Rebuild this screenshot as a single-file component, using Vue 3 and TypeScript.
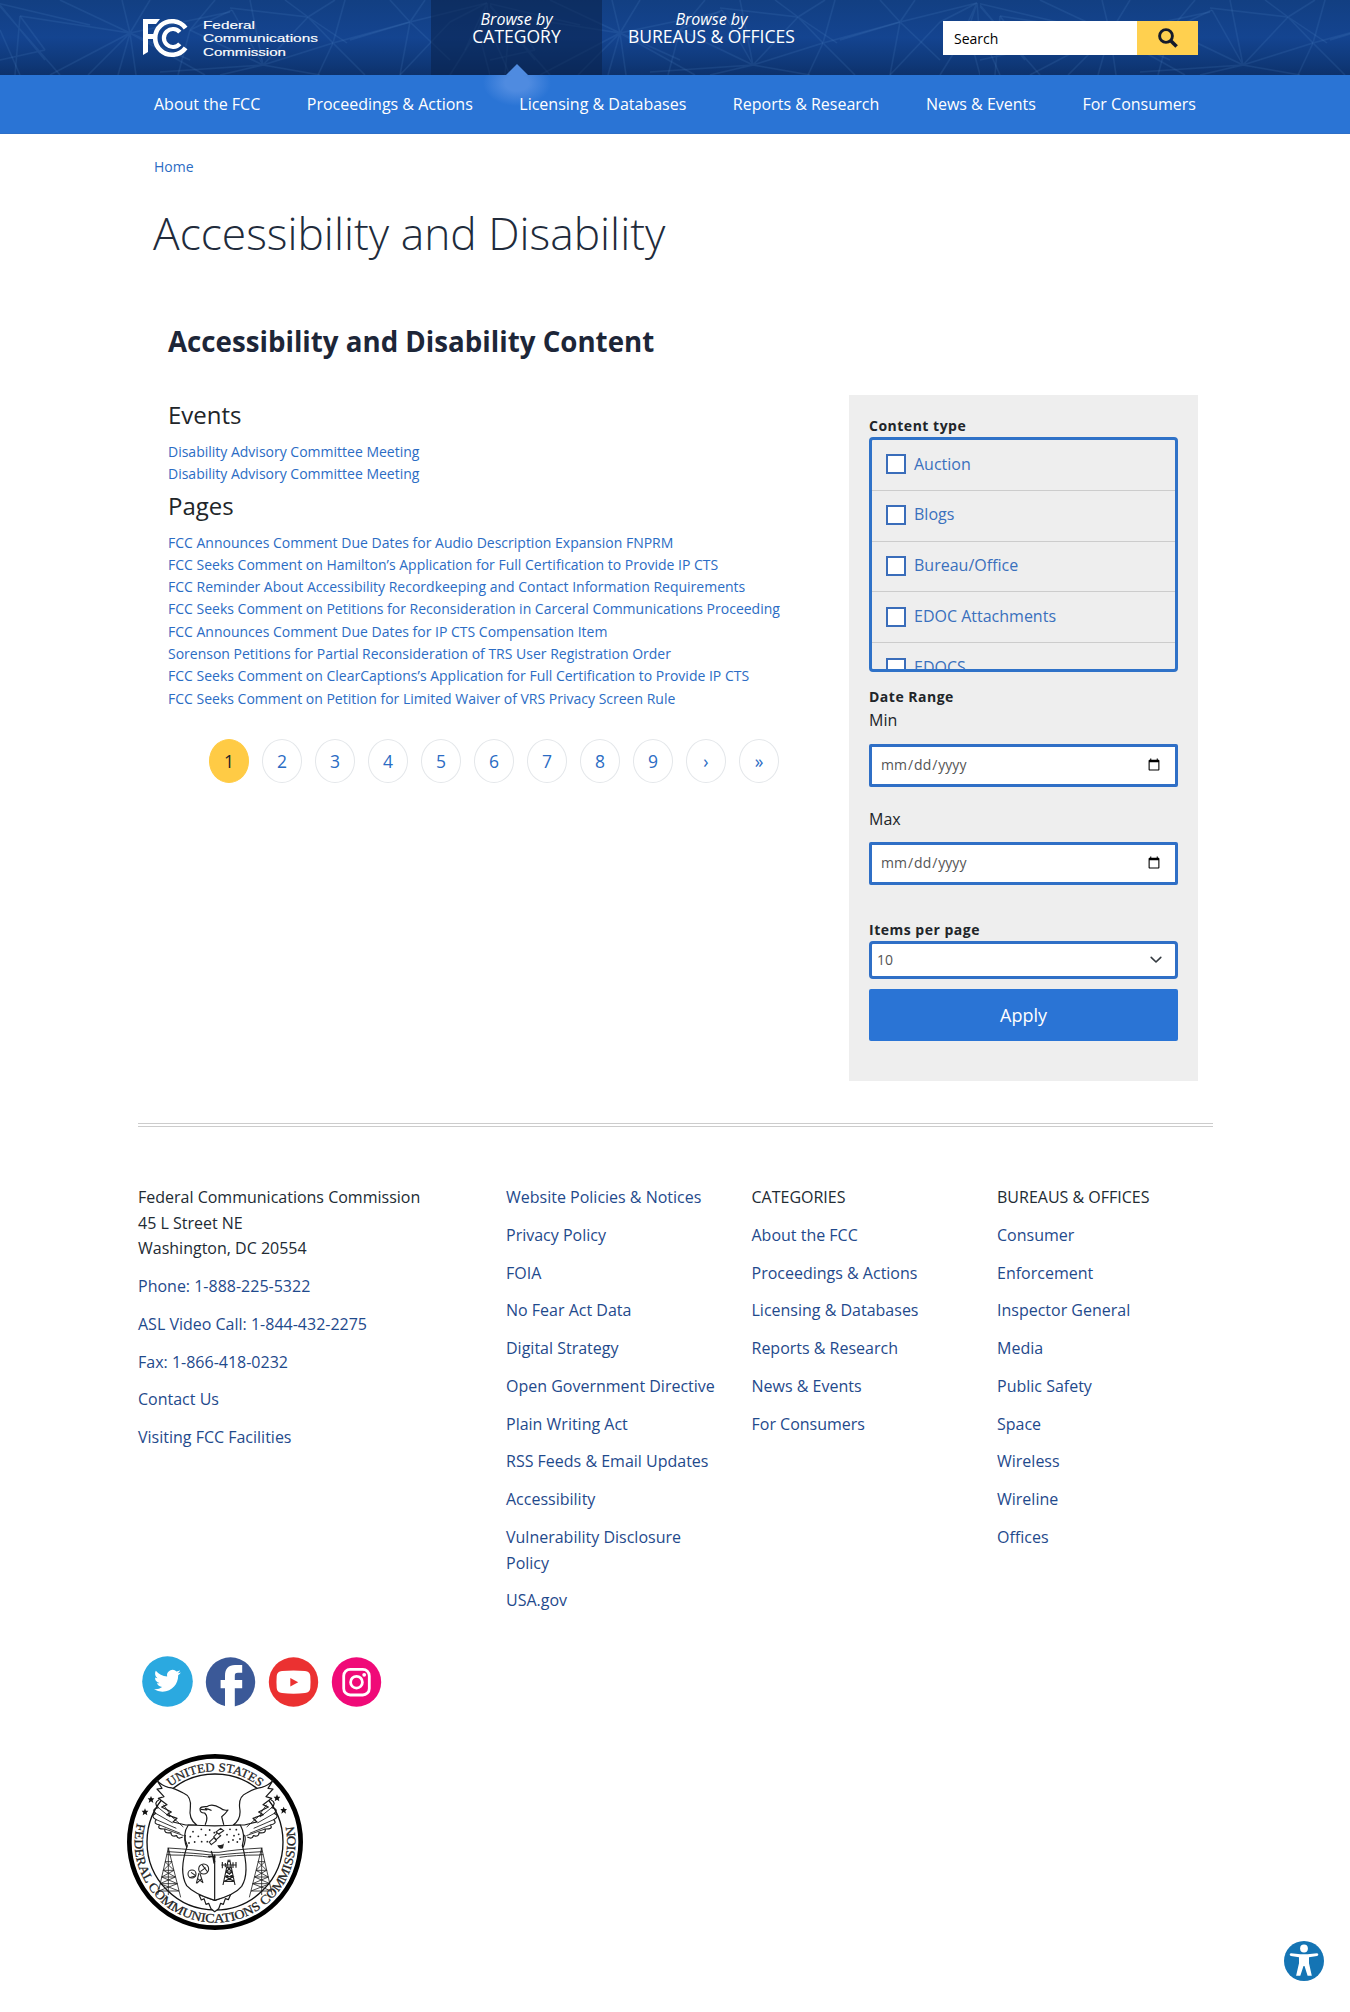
<script setup lang="ts">
import { ref } from 'vue'

const navItems: string[] = [
  'About the FCC',
  'Proceedings & Actions',
  'Licensing & Databases',
  'Reports & Research',
  'News & Events',
  'For Consumers',
]

const events: string[] = ['Disability Advisory Committee Meeting', 'Disability Advisory Committee Meeting']

const pages: string[] = [
  'FCC Announces Comment Due Dates for Audio Description Expansion FNPRM',
  'FCC Seeks Comment on Hamilton’s Application for Full Certification to Provide IP CTS',
  'FCC Reminder About Accessibility Recordkeeping and Contact Information Requirements',
  'FCC Seeks Comment on Petitions for Reconsideration in Carceral Communications Proceeding',
  'FCC Announces Comment Due Dates for IP CTS Compensation Item',
  'Sorenson Petitions for Partial Reconsideration of TRS User Registration Order',
  'FCC Seeks Comment on ClearCaptions’s Application for Full Certification to Provide IP CTS',
  'FCC Seeks Comment on Petition for Limited Waiver of VRS Privacy Screen Rule',
]

const pager: string[] = ['1', '2', '3', '4', '5', '6', '7', '8', '9', '›', '»']
const current = ref('1')

const contentTypes: string[] = ['Auction', 'Blogs', 'Bureau/Office', 'EDOC Attachments', 'EDOCS']

const contactLinks: string[] = [
  'Phone: 1-888-225-5322',
  'ASL Video Call: 1-844-432-2275',
  'Fax: 1-866-418-0232',
  'Contact Us',
  'Visiting FCC Facilities',
]

interface FooterColumn {
  heading?: string
  links: string[]
}

const footerColumns: FooterColumn[] = [
  {
    links: [
      'Website Policies & Notices',
      'Privacy Policy',
      'FOIA',
      'No Fear Act Data',
      'Digital Strategy',
      'Open Government Directive',
      'Plain Writing Act',
      'RSS Feeds & Email Updates',
      'Accessibility',
      'Vulnerability Disclosure Policy',
      'USA.gov',
    ],
  },
  { heading: 'CATEGORIES', links: navItems },
  {
    heading: 'BUREAUS & OFFICES',
    links: ['Consumer', 'Enforcement', 'Inspector General', 'Media', 'Public Safety', 'Space', 'Wireless', 'Wireline', 'Offices'],
  },
]
</script>

<template>
  <div class="page">
    <header class="top">
      <svg class="mesh" width="1350" height="75" aria-hidden="true">
        <defs>
          <pattern id="mesh" width="490" height="75" patternUnits="userSpaceOnUse">
            <g fill="none" stroke="#5f93d6" stroke-opacity=".14" stroke-width="1.5">
              <path d="M130 33 20 16M130 33 60 0M130 33 122 0M130 33 150 0M130 33 50 75M130 33 88 75M130 33 118 75M130 33 136 75M130 33 190 60M130 33 230 12M130 33 205 75" />
              <path d="M263 65 190 30M263 65 232 10M263 65 250 0M263 65 308 17M263 65 333 43M263 65 220 75M263 65 320 75M263 65 160 72" />
              <path d="M308 17 285 0M308 17 335 0M308 17 333 43M308 17 230 8M308 17 347 43" />
              <path d="M333 43 410 22M333 43 318 75M333 43 365 75M333 43 345 0" />
              <path d="M410 22 390 0M410 22 425 0M410 22 487 3M410 22 400 75M410 22 450 60M410 22 350 40" />
              <path d="M487 3 450 22M487 3 478 30M487 3 490 40M487 3 465 50M450 22 400 75M0 5 45 60M-3 3 60 75M-3 3 90 25M20 16 15 75M0 60 45 50M45 50 20 16" />
              <path d="M190 30 215 0M190 30 178 75M190 30 232 10M478 30 450 75M478 30 490 75M0 30 20 75" />
            </g>
          </pattern>
        </defs>
        <rect width="1350" height="75" fill="url(#mesh)" />
      </svg>
      <div class="top-inner">
        <svg class="logo" width="180" height="42" viewBox="0 0 180 42">
          <path d="M0 1h17l-4 5H5v10h6v5H5v13l-5 3z" fill="#fff" />
          <g fill="none" stroke="#fff" stroke-width="4.6">
            <path d="M42.600 10.200A16.800 16.800 0 1 0 42.600 29.800" />
            <path d="M36.800 14.200A9 9 0 1 0 36.800 25.800" stroke-width="4.200" />
          </g>
          <g fill="#fff" font-family="'Liberation Sans', sans-serif" font-size="11.4" stroke="#fff" stroke-width=".15">
            <text x="60" y="10.5" textLength="52" lengthAdjust="spacingAndGlyphs">Federal</text>
            <text x="60" y="24.2" textLength="115" lengthAdjust="spacingAndGlyphs">Communications</text>
            <text x="60" y="37.6" textLength="83" lengthAdjust="spacingAndGlyphs">Commission</text>
          </g>
        </svg>
        <nav class="browse">
          <a class="browse-item active"><em>Browse by</em><span>CATEGORY</span></a>
          <a class="browse-item"><em>Browse by</em><span>BUREAUS &amp; OFFICES</span></a>
        </nav>
        <form class="search" @submit.prevent>
          <div class="search-field">Search</div>
          <button type="submit" aria-label="Search">
            <svg width="20" height="20" viewBox="0 0 20 20" fill="none" stroke="#151b2b">
              <circle cx="8" cy="8" r="6.4" stroke-width="2.9" />
              <path d="M12.5 12.5 18.6 18.6" stroke-width="3.6" />
            </svg>
          </button>
        </form>
      </div>
    </header>
    <nav class="main-nav">
      <ul>
        <li v-for="item in navItems" :key="item">{{ item }}</li>
      </ul>
    </nav>

    <main>
      <a class="crumb">Home</a>
      <h1>Accessibility and Disability</h1>
      <h2>Accessibility and Disability Content</h2>
      <div class="columns">
        <section class="results">
          <h3>Events</h3>
          <ul>
            <li v-for="(item, i) in events" :key="i"><a>{{ item }}</a></li>
          </ul>
          <h3 class="second">Pages</h3>
          <ul>
            <li v-for="item in pages" :key="item"><a>{{ item }}</a></li>
          </ul>
          <div class="pager">
            <a v-for="p in pager" :key="p" :class="{ current: p === current }" @click="current = p">{{ p }}</a>
          </div>
        </section>
        <aside>
          <strong>Content type</strong>
          <div class="type-list">
            <label v-for="t in contentTypes" :key="t"><i></i>{{ t }}</label>
          </div>
          <strong class="range">Date Range</strong>
          <label class="min">Min</label>
          <input type="date" />
          <label class="max">Max</label>
          <input type="date" />
          <strong class="items">Items per page</strong>
          <div class="select">
            <span>10</span>
            <svg width="12" height="8" viewBox="0 0 12 8" fill="none" stroke="#343a40" stroke-width="1.6">
              <path d="M1.200 1.400 6 6 10.800 1.400" stroke-linecap="round" stroke-linejoin="round" />
            </svg>
          </div>
          <button class="apply">Apply</button>
        </aside>
      </div>
    </main>

    <footer>
      <div class="footer-columns">
        <div class="contact">
          <p>Federal Communications Commission<br />45 L Street NE<br />Washington, DC 20554</p>
          <p v-for="c in contactLinks" :key="c"><a>{{ c }}</a></p>
        </div>
        <div v-for="(col, i) in footerColumns" :key="i" class="links">
          <p v-if="col.heading">{{ col.heading }}</p>
          <p v-for="l in col.links" :key="l"><a>{{ l }}</a></p>
        </div>
      </div>
      <div class="social">
        <svg width="51" height="51" viewBox="0 0 51 51">
          <circle cx="25.5" cy="25.5" r="25.3" fill="#2ba9e0" />
          <path transform="translate(12 11.3) scale(1.12)" fill="#fff" d="M23.95 4.57a10 10 0 0 1-2.82.77 4.96 4.96 0 0 0 2.16-2.72c-.95.55-2 .95-3.13 1.18a4.92 4.92 0 0 0-8.38 4.48C7.69 8.1 4.07 6.13 1.64 3.16a4.82 4.82 0 0 0-.67 2.48c0 1.71.87 3.21 2.19 4.1a4.9 4.9 0 0 1-2.23-.62v.06a4.92 4.92 0 0 0 3.95 4.83 5 5 0 0 1-2.21.08 4.94 4.94 0 0 0 4.6 3.42A9.87 9.87 0 0 1 0 19.54a13.99 13.99 0 0 0 7.55 2.21c9.05 0 14-7.5 14-13.98 0-.21 0-.42-.02-.63a9.94 9.94 0 0 0 2.46-2.55z" />
        </svg>
        <svg width="51" height="51" viewBox="0 0 51 51">
          <circle cx="25.5" cy="26" r="24.7" fill="#3b5998" />
          <path fill="#fff" d="M20 51V32.200h-4.400V24H20v-4.200C20 12.500 23.500 9 30 9h7.200v7.700H33c-2.600 0-3.200 1-3.200 3.200V24h7.400v8.200h-7.400V51z" />
        </svg>
        <svg width="51" height="51" viewBox="0 0 51 51">
          <circle cx="25.5" cy="26" r="24.7" fill="#eb3131" />
          <path fill="#fff" d="M14 15Q25.500 13.800 37 15 42 15.300 42.300 20 42.800 26 42.300 32 42 36.500 37 37 25.500 38.300 14 37 9 36.500 8.700 32 8.200 26 8.700 20 9 15.300 14 15z" />
          <path fill="#eb3131" d="M22.300 22v8.400l7.900-4.200z" />
        </svg>
        <svg width="51" height="51" viewBox="0 0 51 51">
          <circle cx="25.5" cy="26" r="24.7" fill="#f00a78" />
          <g fill="none" stroke="#fff" stroke-width="2.8">
            <rect x="12.700" y="13.400" width="25.600" height="25.600" rx="6.500" />
            <circle cx="25.5" cy="26.200" r="5.900" />
          </g>
          <circle cx="33.200" cy="18.800" r="1.900" fill="#fff" />
        </svg>
      </div>
      <svg class="seal" width="180" height="180" viewBox="30 37 540 540">
        <defs>
          <path id="seal-top" d="M166 142A213 213 0 0 1 434 142" />
          <path id="seal-bottom" d="M66 250A241 241 0 1 0 534 250" />
        </defs>
        <circle cx="300" cy="307" r="257" fill="#fff" stroke="#000" stroke-width="14" />
        <circle cx="300" cy="307" r="204" fill="none" stroke="#111" stroke-width="4" />
        <g font-family="'Liberation Serif', serif" fill="#222" stroke="#222" stroke-width=".8">
          <text font-size="37" textLength="290" lengthAdjust="spacingAndGlyphs"><textPath href="#seal-top">UNITED STATES</textPath></text>
          <text font-size="38" textLength="864" lengthAdjust="spacingAndGlyphs"><textPath href="#seal-bottom">FEDERAL COMMUNICATIONS COMMISSION</textPath></text>
        </g>
        <g fill="#111">
          <path v-for="(s, i) in [[108, 180], [90, 217], [486, 175], [506, 212]]" :key="i" :transform="`translate(${s[0]} ${s[1]})`" d="M0-11 3-4 10-4 5 2 7 10 0 5-7 10-5 2-10-4-3-4z" />
        </g>
        <!-- wings and radio towers, drawn once and mirrored -->
        <g v-for="side in [1, -1]" :key="side" :transform="side === 1 ? '' : 'translate(600 0) scale(-1 1)'" fill="#fff" stroke="#1a1a1a" stroke-width="3.6" stroke-linejoin="round">
          <path d="M126 122 141 146 126 148 147 171 130 176 156 195 140 202 169 217 155 225 186 236 174 247 212 256 245 256Q220 238 226 205 230 170 205 160 178 145 160 143 140 138 126 122z" />
          <path d="M132 180Q114 190 130 204 108 208 122 221 104 229 124 240 112 252 134 256 124 269 150 268 145 282 168 279 168 293 185 288 188 300 203 292" fill="none" />
          <path d="M130 204 165 232M122 221 173 250M124 240 184 266M134 256 196 281M150 268 206 288M160 222 205 262M145 195 163 220" fill="none" stroke-width="2.6" />
          <path d="M160 325 128 466M160 325 197 473M145 392H177M140 412H181M135 432H187M131 454H192M145 392 181 412 135 432 192 454M177 392 140 412 187 432 131 454M150 366H171M155 345H166M150 366 177 392M171 366 145 392M160 325V466" fill="none" stroke-width="2.4" />
        </g>
        <g fill="#fff" stroke="#1a1a1a" stroke-width="3.6" stroke-linejoin="round" stroke-linecap="round">
          <path d="M271 254Q281 232 269 220 255 221 255 207 258 200 275 201 292 190 316 205 325 214 339 211 331 223 320 231L326 254" />
          <path d="M271 207Q280 207 288 212M258 209 275 211" fill="none" />
          <path d="M252 465 259 481 267 477 273 494 281 491 288 507 299 516 311 507 317 491 325 494 331 477 340 480 348 462 300 482z" />
          <path d="M220 256Q300 261 376 256 392 285 382 318 405 400 380 440 360 465 299 482 237 463 215 438 190 395 217 318 200 285 220 256z" />
          <path d="M299 346V480M215 322Q206 300 211 287M385 322Q394 300 389 287" fill="none" />
          <path d="M159 325Q245 330 288 338L312 338Q355 330 441 325M160 336Q245 341 288 346L312 346Q355 341 440 336M165 346Q245 346 285 353M315 353Q355 346 435 346" fill="none" stroke-width="2.6" />
          <path d="M289 335 299 366M281 350 300 352M294 352 297 370" fill="none" stroke-width="4" />
        </g>
        <g fill="#222">
          <circle v-for="(d, i) in [[234, 276], [259, 269], [284, 271], [226, 291], [250, 290], [272, 286], [222, 310], [239, 307], [260, 306], [277, 306], [345, 269], [364, 270], [336, 285], [357, 288], [371, 284], [341, 307], [354, 301], [367, 307], [375, 298], [298, 279]]" :key="i" :cx="d[0]" :cy="d[1]" r="2.7" />
          <path d="M307 317Q331 315 328 306L324 326Q312 331 307 317z" />
        </g>
        <g fill="#fff" stroke="#222" stroke-width="3.2">
          <path d="M289 315 304 303 297 294 283 307zM311 283 326 273 317 266 303 277zM304 300 317 288 307 280 296 292z" />
          <circle cx="231" cy="403" r="12" />
          <circle cx="266" cy="388" r="15" />
          <path d="M223 414 243 408M278 397 261 375M252 400 244 431M255 402 264 430M247 416 264 429M261 416 245 431M241 407 228 398M256 396 272 384" />
          <path d="M340 360 324 436M344 360 360 436M336 382H348M333 397H352M331 411H355M328 425H358M336 382 352 397 331 411 358 425M348 382 333 397 355 411 328 425M319 376H365M322 367V386M331 370V383M354 368V385M363 367V384M337 365H347" stroke-width="3.4" />
        </g>
      </svg>
    </footer>

    <button class="a11y" aria-label="Accessibility menu">
      <svg width="46" height="46" viewBox="0 0 46 46">
        <circle cx="23" cy="23" r="20" fill="#1474b4" />
        <circle cx="23" cy="10.5" r="3.9" fill="#fff" />
        <path fill="#fff" d="M10 15.200 19.500 16.200h7L36 15.200q1.500.2 1.300 1.500-.1 1-1.300 1.200L28 19.200v6l2.800 12.600h-4.200L23.500 28h-1l-3.200 9.800h-4.200L18 25.200v-6L10 17.900q-1.200-.2-1.300-1.200-.1-1.300 1.300-1.500z" />
      </svg>
    </button>
  </div>
</template>

<style>
body {
  margin: 0;
  background: #fff;
}
</style>

<style scoped>
* {
  box-sizing: border-box;
}
.page {
  position: relative;
  height: 2012px;
  overflow: hidden;
  font-family: 'Open Sans', sans-serif;
  font-size: 16px;
  line-height: 1.6;
  color: #212529;
}
ul {
  list-style: none;
  margin: 0;
  padding: 0;
}
p, h1, h2, h3 {
  margin: 0;
}
.top {
  position: relative;
  height: 75px;
  background: linear-gradient(#123f82, #144490 50%, #0f3878 85%, #0d316b);
}
.mesh {
  position: absolute;
  inset: 0;
}
.top-inner {
  position: relative;
  display: flex;
  width: 1056px;
  height: 75px;
  margin-left: 142px;
}
.logo {
  margin-top: 18px;
  margin-left: 1px;
}
.browse {
  display: flex;
  margin-left: 108px;
}
.browse-item {
  position: relative;
  display: flex;
  flex-direction: column;
  align-items: center;
  padding: 10px 26px 0;
  color: #fff;
  line-height: 18px;
  white-space: nowrap;
}
.browse-item em {
  font-size: 16px;
}
.browse-item span {
  font-size: 17.5px;
  line-height: 16px;
}
.active {
  width: 171px;
  background: rgba(9, 32, 72, 0.55);
}
.active::after {
  content: '';
  position: absolute;
  bottom: 0;
  left: 75px;
  border: 11px solid transparent;
  border-top: 0;
  border-bottom-color: #4f8be0;
}
.search {
  display: flex;
  width: 255px;
  height: 34px;
  margin: 21px 0 0 auto;
}
.search-field {
  flex: 1;
  padding-left: 11px;
  background: #fff;
  color: #000;
  font-size: 14px;
  line-height: 36px;
}
.search button {
  display: flex;
  align-items: center;
  justify-content: center;
  width: 61px;
  padding: 0;
  border: 0;
  background: #ffd04f;
}
.main-nav {
  height: 59px;
  background: radial-gradient(ellipse 34px 23px at 517px 8px, #4f8be0 35%, transparent), #2a74d5;
  border-bottom: 1px solid #2d6fc8;
}
.main-nav ul {
  display: flex;
  justify-content: space-between;
  width: 1042px;
  margin-left: 154px;
  line-height: 59px;
  color: #fff;
}
main {
  width: 1075px;
  margin-left: 138px;
  height: 989px;
}
a {
  color: #2b6cc4;
}
.crumb {
  display: block;
  padding: 22px 0 0 16px;
  font-size: 14px;
  line-height: 22px;
}
h1 {
  padding: 24px 0 0 15px;
  font-size: 44.35px;
  font-weight: 300;
  line-height: 62px;
  color: #212b3b;
}
h2 {
  padding: 58px 0 0 30px;
  font-size: 27.7px;
  font-weight: 700;
  line-height: 38px;
  color: #1d2638;
}
.columns {
  display: flex;
  justify-content: space-between;
  align-items: flex-start;
  padding: 35px 15px 0 30px;
}
.results {
  padding-top: 5px;
}
h3 {
  font-size: 24px;
  font-weight: 400;
  line-height: 29px;
  margin-bottom: 12px;
}
.second {
  margin-top: 5px;
}
.results li {
  font-size: 14px;
  line-height: 22.3px;
}
.pager {
  display: flex;
  gap: 13px;
  margin: 29px 0 0 41px;
}
.pager a {
  width: 40px;
  height: 44px;
  border: 1px solid #e4e7ea;
  border-radius: 50%;
  font-size: 17.5px;
  line-height: 43px;
  text-align: center;
}
.pager .current {
  background: #ffcb45;
  border-color: #ffcb45;
  color: #212529;
}
aside {
  display: flex;
  flex-direction: column;
  width: 349px;
  height: 686px;
  padding: 20px 20px 0;
  background: #eee;
}
strong {
  font-size: 14px;
  line-height: 22px;
  letter-spacing: 0.5px;
}
.type-list {
  height: 235px;
  overflow: hidden;
  border: 3px solid #2f72c8;
  border-radius: 4px;
}
.type-list label {
  display: flex;
  align-items: center;
  gap: 8px;
  height: 50.8px;
  padding: 0 0 1px 14px;
  border-bottom: 1px solid #ccc;
  color: #3a70bd;
}
.type-list i {
  width: 20px;
  height: 20px;
  border: 2px solid #3a6dba;
  background: #fff;
}
.range {
  margin-top: 14px;
}
.min {
  line-height: 24px;
}
.max {
  margin-top: 19px;
  line-height: 26px;
}
input {
  height: 43px;
  margin-top: 12px;
  padding: 0 12px 2px 8px;
  border: 3px solid #2f6fc6;
  border-radius: 2px;
  background: #fff;
  font: 14px 'Open Sans', sans-serif;
  color: #555;
}
.max + input {
  margin-top: 10px;
}
.items {
  margin-top: 34px;
}
.select {
  display: flex;
  align-items: center;
  justify-content: space-between;
  height: 38px;
  padding: 0 13px 0 5px;
  border: 3px solid #2f6fc6;
  border-radius: 4px;
  background: #fff;
  font-size: 14px;
  color: #555;
}
.apply {
  height: 52px;
  margin-top: 10px;
  border: 0;
  border-radius: 2px;
  background: #2a74d5;
  color: #fff;
  font: 18px 'Open Sans', sans-serif;
}
footer {
  width: 1075px;
  margin-left: 138px;
  border-top: 4px double #ccc;
  color: #222b33;
}
.footer-columns {
  display: flex;
  height: 485px;
  padding-top: 58px;
}
.footer-columns p {
  line-height: 25.6px;
  margin-bottom: 12.2px;
}
.footer-columns a {
  color: #1f4a8c;
}
.contact {
  flex: none;
  width: 368px;
}
.links {
  flex: none;
  width: 245.5px;
  padding-right: 30px;
}
.social {
  display: flex;
  gap: 12px;
  padding: 44px 0 0 4px;
}
.seal {
  display: block;
  margin: 45px 0 0 -13px;
}
.a11y {
  position: absolute;
  top: 1938px;
  left: 1281px;
  padding: 0;
  border: 0;
  background: none;
  line-height: 0;
}
</style>
